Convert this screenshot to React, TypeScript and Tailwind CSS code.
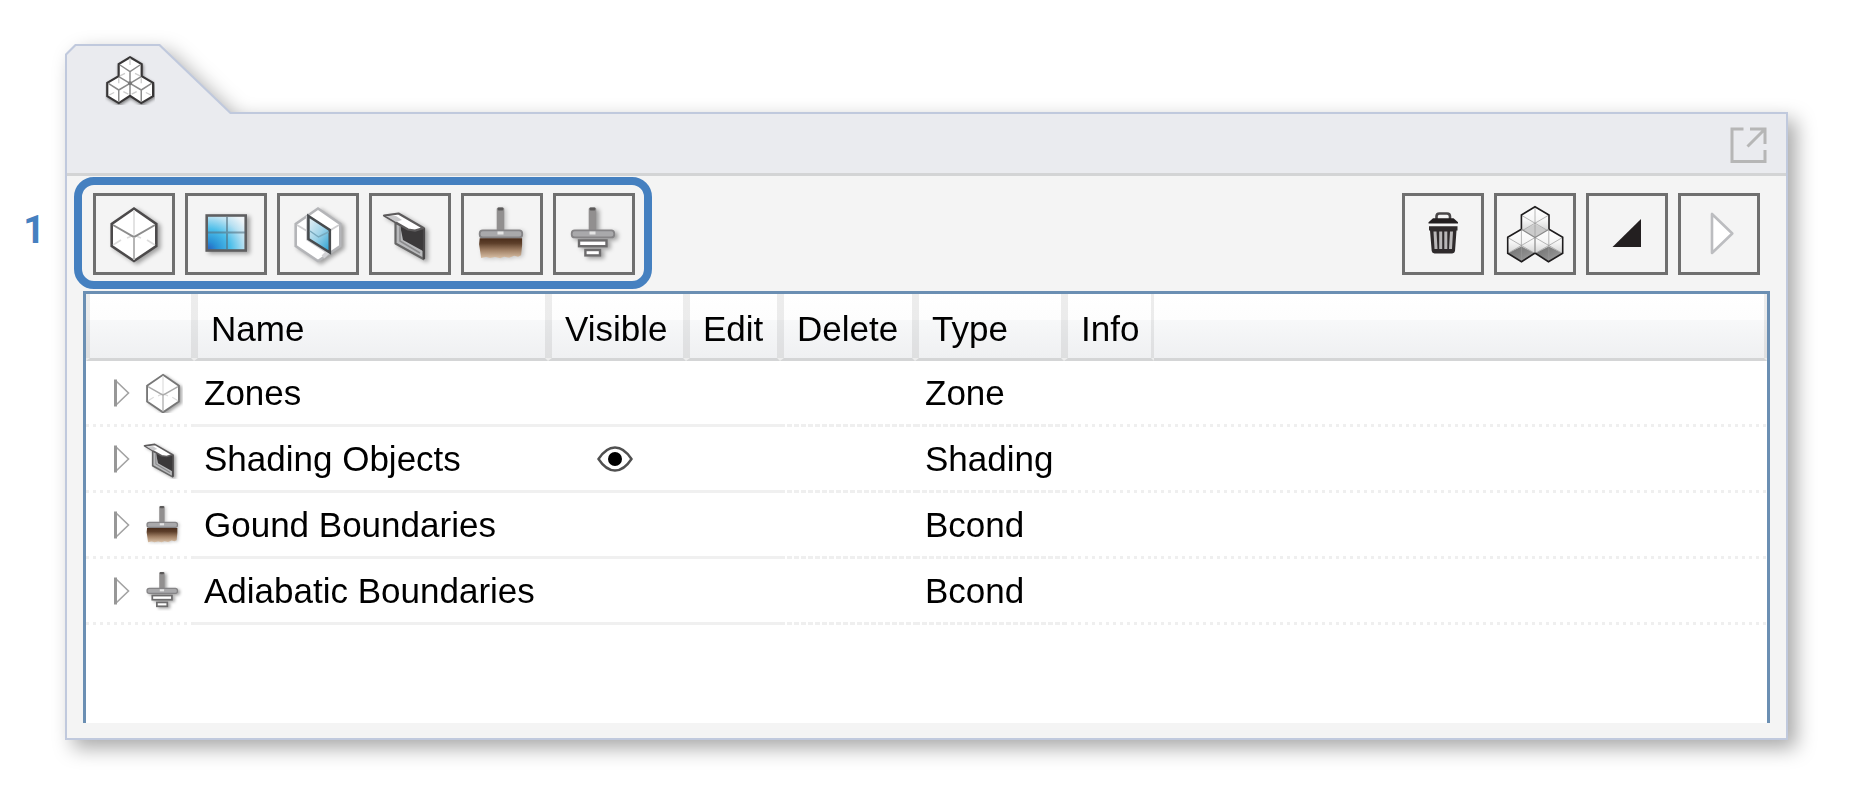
import React from "react";

type IconProps = { className?: string; viewBox?: string };
type IconComponent = (props: IconProps) => React.ReactElement;

function Svg({ className = "size-[76px]", viewBox = "0 0 76 76", children }: IconProps & { children: React.ReactNode }) {
  return (
    <svg className={className} viewBox={viewBox} fill="none" aria-hidden="true">
      {children}
    </svg>
  );
}

const softShadow = "drop-shadow-[3px_2px_2px_rgba(0,0,0,0.35)]";

function ZoneIcon(props: IconProps) {
  const small = props.viewBox !== undefined;
  return (
    <Svg {...props}>
      <g className={softShadow}>
        <path d="M38 12.5 60.3 28v22L38 65 15.7 50V28Z" fill="#fff" stroke={small ? "#777" : "#4c4a4b"} strokeWidth="2.6" />
      </g>
      <path d="M38 14v24M17 49l8-5M59 49l-8-5M31 42l7-3 7 3" stroke="#dcdcdc" strokeWidth="1.6" />
      <path d="M17 29 38 41l21-12" stroke={small ? "#aaa" : "#8d8d8d"} strokeWidth="2" />
      <path d="M38 41v23" stroke="#b5b5b5" strokeWidth="2" />
    </Svg>
  );
}

function WindowIcon(props: IconProps) {
  return (
    <Svg {...props}>
      <defs>
        <radialGradient id="glass" cx="0" cy="1" r="1.25">
          <stop offset="0" stopColor="#2858bd" />
          <stop offset="0.22" stopColor="#2a93d6" />
          <stop offset="0.5" stopColor="#4dbfea" />
          <stop offset="0.78" stopColor="#b9e1f2" />
          <stop offset="1" stopColor="#eef4f8" />
        </radialGradient>
      </defs>
      <g className={softShadow}>
        <rect x="18.7" y="19.500" width="39" height="35" fill="url(#glass)" stroke="#5f5f61" strokeWidth="2.6" />
      </g>
      <path d="M39 21v33M20 36.500h37" stroke="#54707f" strokeOpacity="0.6" strokeWidth="2" />
    </Svg>
  );
}

function OpeningIcon(props: IconProps) {
  return (
    <Svg {...props}>
      <defs>
        <linearGradient id="pane" x1="0.1" y1="0" x2="0.9" y2="1">
          <stop offset="0" stopColor="#e6f0f5" />
          <stop offset="0.5" stopColor="#9fd3e8" />
          <stop offset="1" stopColor="#2ea3d2" />
        </linearGradient>
      </defs>
      <g className={softShadow}>
        <path d="M38 12.5 60.3 28v22L38 65 15.7 50V28Z" fill="#fff" stroke="#b4b5b8" strokeWidth="2.6" />
      </g>
      <path d="M17 29l10 6M59 29l-10 6" stroke="#cfcfd1" strokeWidth="1.8" />
      <path d="M28 20v23l20 13-5 5" stroke="#d2d2d5" strokeWidth="4" />
      <path d="M28.400 20 49.800 34v22.500L28.400 43Z" fill="url(#pane)" stroke="#474b4e" strokeWidth="2.6" />
      <path d="M30 35l8.500 6 10-5" stroke="#79a9bd" strokeWidth="1.5" />
    </Svg>
  );
}

function ShadingIcon(props: IconProps) {
  return (
    <Svg {...props}>
      <g className={softShadow}>
        <path d="M23.5 27v20.5L51.5 63V32L40 34Z" fill="#b9babc" stroke="#666" strokeWidth="2.2" strokeLinejoin="round" />
        <path d="M28 29l3 15 20 11V32l-9 3Z" fill="#3b393a" />
        <path d="M28 30v15l20 12" stroke="#8a8a8c" strokeWidth="1.5" />
        <path d="M52 32v31" stroke="#4a4849" strokeWidth="2.2" />
        <path d="M12 19.6 26.5 17.5 51.5 32 43 34.6 36 33.5Z" fill="#fff" stroke="#5d5b5c" strokeWidth="2.2" strokeLinejoin="round" />
        <path d="M14 20h10l6 4-6 2Z" fill="#c9c9cb" />
      </g>
    </Svg>
  );
}

function StemAndPlate() {
  return (
    <>
      <rect x="32.700" y="11.5" width="7.6" height="25" rx="1.5" fill="#918f8f" />
      <rect x="33.700" y="11.5" width="5.6" height="3" rx="1" fill="#5c5a5a" />
      <rect x="15.700" y="34.4" width="42.5" height="7" rx="3" fill="#a9a9ab" stroke="#858486" strokeWidth="1.8" />
      <path d="M33.500 37h6" stroke="#e4e4e4" strokeWidth="3" />
    </>
  );
}

function GroundIcon(props: IconProps) {
  return (
    <Svg {...props}>
      <defs>
        <linearGradient id="soil" x1="0" y1="0" x2="0" y2="1">
          <stop offset="0" stopColor="#4a2d1b" />
          <stop offset="0.25" stopColor="#5d3f2a" />
          <stop offset="0.6" stopColor="#a08065" />
          <stop offset="1" stopColor="#d9c0a6" />
        </linearGradient>
      </defs>
      <g className="drop-shadow-[2px_1px_2px_rgba(0,0,0,0.2)]">
        <StemAndPlate />
        <path d="M15.700 42.3h42.4v7l-1 10-3 1.5-4-1-5 2-5-1-4 1.4-5-1.2-5 1-4-1-5 1-1.4-9.7-.6-4Z" fill="url(#soil)" />
      </g>
    </Svg>
  );
}

function AdiabaticIcon(props: IconProps) {
  return (
    <Svg {...props}>
      <g className={softShadow}>
        <StemAndPlate />
        <rect x="23" y="44.4" width="27.5" height="5.8" fill="#fff" stroke="#6d6c6d" strokeWidth="2.4" />
        <rect x="29.4" y="54" width="14.6" height="5.4" fill="#fff" stroke="#6d6c6d" strokeWidth="2.4" />
      </g>
    </Svg>
  );
}

const cubesOutline =
  "M38 10.7 52 19v14.3l13.7 8v16L51.5 65.7 38 57l-13.5 8.7-13.8-8.4v-16l13.7-8V19Z";

function CubesIcon(props: IconProps) {
  return (
    <Svg {...props}>
      <g className="drop-shadow-[1px_2px_2px_rgba(0,0,0,0.45)]">
        <path d={cubesOutline} fill="#fff" stroke="#383637" strokeWidth="2.600" />
      </g>
      <path d="M38 12v8M26 33l6-3M50 33l-6-3M13 56l6-3M63 56l-6-3M30 52l6 3M46 52l-6 3M24.5 36v6M51.5 36v6" stroke="#ccc" strokeWidth="1.6" />
      <path d="M26 20l12 8 12-8M38 28v28M12 42l12.500 8L38 42l13.500 8L64 42M24.500 50v14M51.500 50v14M24.500 34 38 42l13.500-8" stroke="#8b8b8b" strokeWidth="1.8" />
      <circle cx="38" cy="42" r="2.400" fill="#777" />
    </Svg>
  );
}

function SolidCube({ x, y, dark }: { x: number; y: number; dark: boolean }) {
  return (
    <g transform={`translate(${x} ${y})`}>
      <path d="M0-16.200 13.700-8V8L0 16-13.700 8V-8Z" fill="url(#cubeBody)" />
      <path d="M0 1-13.700 8 0 16 13.700 8Z" fill={dark ? "url(#cubeDark)" : "#cbcbcb"} />
      <path d="M-13.700-8 0 0l13.700-8M0-16v32M-13.700 8 0 0l13.700 8" stroke="#9a9a9a" strokeOpacity="0.7" strokeWidth="1" />
    </g>
  );
}

function SolidCubesIcon(props: IconProps) {
  return (
    <Svg {...props}>
      <defs>
        <linearGradient id="cubeBody" x1="0" y1="0" x2="0" y2="1">
          <stop offset="0" stopColor="#fff" />
          <stop offset="0.4" stopColor="#f6f6f6" />
          <stop offset="0.8" stopColor="#cfcfcf" />
          <stop offset="1" stopColor="#bdbdbd" />
        </linearGradient>
        <linearGradient id="cubeDark" x1="0" y1="0" x2="1" y2="1">
          <stop offset="0" stopColor="#6f6f6f" />
          <stop offset="0.6" stopColor="#8c8c8c" />
          <stop offset="1" stopColor="#ababab" />
        </linearGradient>
      </defs>
      <SolidCube x={38} y={27.2} dark={false} />
      <SolidCube x={24.4} y={49.5} dark />
      <SolidCube x={51.8} y={49.5} dark />
      <path d={cubesOutline} stroke="#1f1d1e" strokeWidth="1.6" />
      <path d="M24.400 33.300 38 41.500l14-8.200M38 41.500V57" stroke="#8a8a8a" strokeWidth="1.200" />
    </Svg>
  );
}

function TrashIcon(props: IconProps) {
  return (
    <Svg {...props}>
      <path d="M31.500 23v-2.500q0-3 3-3h7.500q3 0 3 3V23" stroke="#4a4748" strokeWidth="2.600" />
      <path d="M28 22.300h20.500l4.500 4v1.300H23.500v-1.300Z" fill="#231f20" />
      <path d="M24 30.300h28.500v4.200h-1L50 55q-.3 2.400-2.800 2.400H29.600q-2.600 0-2.900-2.400L25 34.500h-1Z" fill="#2f2b2c" />
      <path d="M30 35.500 31 53M35.700 35.500V53M40.800 35.500V53M46.500 35.500 45.500 53" stroke="#b9b7b8" strokeWidth="3" />
    </Svg>
  );
}

function CornerIcon(props: IconProps) {
  return (
    <Svg {...props}>
      <path d="M23.500 51 52 23v28Z" fill="#231f20" />
    </Svg>
  );
}

function PlayIcon(props: IconProps) {
  return (
    <Svg {...props}>
      <path d="M31 18v39l20.300-19.500Z" fill="#fff" stroke="#bcbdc0" strokeWidth="2.600" strokeLinejoin="round" />
    </Svg>
  );
}

function PopOutIcon() {
  return (
    <svg className="h-9 w-[37px]" viewBox="0 0 37 36" fill="none" stroke="#b6b6b6" strokeWidth="3" aria-hidden="true">
      <path d="M13.500 2H2v32.500h33V23M20 2h15v15M35 2 17.500 19.500" />
    </svg>
  );
}

function EyeIcon() {
  return (
    <svg className="h-[26px] w-9" viewBox="0 0 36 26" fill="none" aria-hidden="true">
      <path d="M1.500 13Q9 1.500 18 1.500T34.500 13Q27 24.500 18 24.500T1.500 13Z" fill="#fff" stroke="#505050" strokeWidth="2.400" />
      <circle cx="18" cy="13" r="7" fill="#000" />
    </svg>
  );
}

function DisclosureIcon() {
  return (
    <svg className="h-7 w-4" viewBox="0 0 16 28" fill="none" aria-hidden="true">
      <path d="M1.500 1.500 14.500 14 1.500 26.500" stroke="#a3a3a3" strokeWidth="1.600" />
      <path d="M1.500 .5v27" stroke="#979797" strokeWidth="3" />
    </svg>
  );
}

function ToolButton({ label, icon: Icon }: { label: string; icon: IconComponent }) {
  return (
    <button type="button" aria-label={label} className="size-[82px] shrink-0 border-3 border-[#6f6f6f] bg-[#f4f4f4]">
      <Icon />
    </button>
  );
}

const createTools: { label: string; icon: IconComponent }[] = [
  { label: "Add zone", icon: ZoneIcon },
  { label: "Add window", icon: WindowIcon },
  { label: "Add opening", icon: OpeningIcon },
  { label: "Add shading", icon: ShadingIcon },
  { label: "Add ground boundary", icon: GroundIcon },
  { label: "Add adiabatic boundary", icon: AdiabaticIcon },
];

const viewTools: { label: string; icon: IconComponent }[] = [
  { label: "Delete", icon: TrashIcon },
  { label: "Show all zones", icon: SolidCubesIcon },
  { label: "Collapse", icon: CornerIcon },
  { label: "Expand", icon: PlayIcon },
];

const rows: { name: string; type: string; visible: boolean; icon: IconComponent }[] = [
  { name: "Zones", type: "Zone", visible: false, icon: ZoneIcon },
  { name: "Shading Objects", type: "Shading", visible: true, icon: ShadingIcon },
  { name: "Gound Boundaries", type: "Bcond", visible: false, icon: GroundIcon },
  { name: "Adiabatic Boundaries", type: "Bcond", visible: false, icon: AdiabaticIcon },
];

const headCell =
  "h-[67px] border-b-3 border-l-4 border-r-3 border-l-black/7 border-r-black/7 border-b-[#d4d5d6] bg-[linear-gradient(#ffffff_0%,#fdfdfd_40%,#f7f8f9_41%,#eff0f2_100%)] pl-[13px] pt-1.5 text-left font-normal";
const cell = "h-[66px] bg-bottom bg-no-repeat bg-[length:100%_3px] p-0 pb-[3px]";
const solid = "bg-[linear-gradient(#f0f0f0,#f0f0f0)]";
const dashed = "bg-[repeating-linear-gradient(90deg,#efefef_0px,#efefef_5px,transparent_5px,transparent_7px)]";
const dotted = "bg-[repeating-linear-gradient(90deg,#efefef_0px,#efefef_3px,transparent_3px,transparent_7px)]";

function ObjectTable() {
  return (
    <table className="w-full table-fixed border-separate border-spacing-0 text-[35px] leading-[40px] text-black">
      <colgroup>
        <col className="w-[108px]" />
        <col className="w-[354px]" />
        <col className="w-[138px]" />
        <col className="w-[94px]" />
        <col className="w-[135px]" />
        <col className="w-[149px]" />
        <col className="w-[90px]" />
        <col />
      </colgroup>
      <thead>
        <tr>
          <th className={headCell} aria-label="Item" />
          <th className={headCell}>Name</th>
          <th className={headCell}>Visible</th>
          <th className={headCell}>Edit</th>
          <th className={headCell}>Delete</th>
          <th className={headCell}>Type</th>
          <th className={headCell}>Info</th>
          <td className="border-b-3 border-r-3 border-b-[#d4d5d6] border-r-black/7 bg-[linear-gradient(#ffffff_0%,#fdfdfd_40%,#f7f8f9_41%,#eff0f2_100%)]" />
        </tr>
      </thead>
      <tbody>
        {rows.map(({ name, type, visible, icon: Icon }) => (
          <tr key={name}>
            <td className={`${cell} ${dotted}`}>
              <div className="flex items-center gap-[13px] pl-7">
                <button type="button" aria-label={`Expand ${name}`}>
                  <DisclosureIcon />
                </button>
                <Icon className="size-10 shrink-0" viewBox="10 10 56 56" />
              </div>
            </td>
            <td className={`${cell} ${solid}`}>
              <span className="pl-2.5">{name}</span>
            </td>
            <td className={`${cell} ${solid}`}>
              <div className="flex justify-center pr-1">
                {visible && (
                  <button type="button" aria-label={`Toggle visibility of ${name}`}>
                    <EyeIcon />
                  </button>
                )}
              </div>
            </td>
            <td className={`${cell} ${solid}`} />
            <td className={`${cell} ${dashed}`} />
            <td className={`${cell} ${dashed}`}>
              <span className="pl-2.5">{type}</span>
            </td>
            <td className={`${cell} ${dotted}`} />
            <td className={`${cell} ${dotted}`} />
          </tr>
        ))}
      </tbody>
    </table>
  );
}

export default function App() {
  return (
    <main className="flex min-h-screen items-start bg-white pr-[71px] pt-11 font-['Liberation_Sans',Arial,sans-serif]">
      <div className="w-[65px] shrink-0 pr-5 pt-[164px] text-right font-['Roboto',sans-serif] text-[38px] font-bold leading-[44px] text-[#4580c0]">
        1
      </div>
      <section className="min-w-0 flex-1 drop-shadow-[8px_8px_10px_rgba(0,0,0,0.34)]">
        <div className="relative z-10 -mb-0.5 h-[70px] w-[168px] bg-[#c0c9dd] pl-0.5 pr-[3px] pt-0.5 [clip-path:polygon(0_10px,10px_0,95px_0,100%_100%,0_100%)]">
          <button
            type="button"
            aria-label="Zones panel"
            className="flex h-full w-full items-center bg-[#eaebef] pl-[38px] [clip-path:polygon(0_9px,9px_0,92px_0,100%_100%,0_100%)]"
          >
            <CubesIcon className="size-[50px]" viewBox="8 8 60 60" />
          </button>
        </div>
        <div className="border-2 border-[#c0c9dd] bg-[#f4f4f4]">
          <header className="flex h-[62px] items-center justify-end border-b-3 border-[#d3d4d5] bg-[#eaebef] pr-[19px] pt-0.5">
            <button type="button" aria-label="Open in new window">
              <PopOutIcon />
            </button>
          </header>
          <div className="flex items-center justify-between pb-0.5 pl-[7px] pr-[26px] pt-px">
            <div
              role="group"
              aria-label="Create objects"
              className="flex gap-2.5 rounded-[20px] border-8 border-[#4580c0] pb-1.5 pl-[11px] pr-[9px] pt-2"
            >
              {createTools.map((tool) => (
                <ToolButton key={tool.label} {...tool} />
              ))}
            </div>
            <div role="group" aria-label="View" className="flex gap-2.5 pt-0.5">
              {viewTools.map((tool) => (
                <ToolButton key={tool.label} {...tool} />
              ))}
            </div>
          </div>
          <div className="mx-4 mb-[15px] border-x-3 border-t-3 border-[#6b8fb3] bg-white pb-[98px]">
            <ObjectTable />
          </div>
        </div>
      </section>
    </main>
  );
}
